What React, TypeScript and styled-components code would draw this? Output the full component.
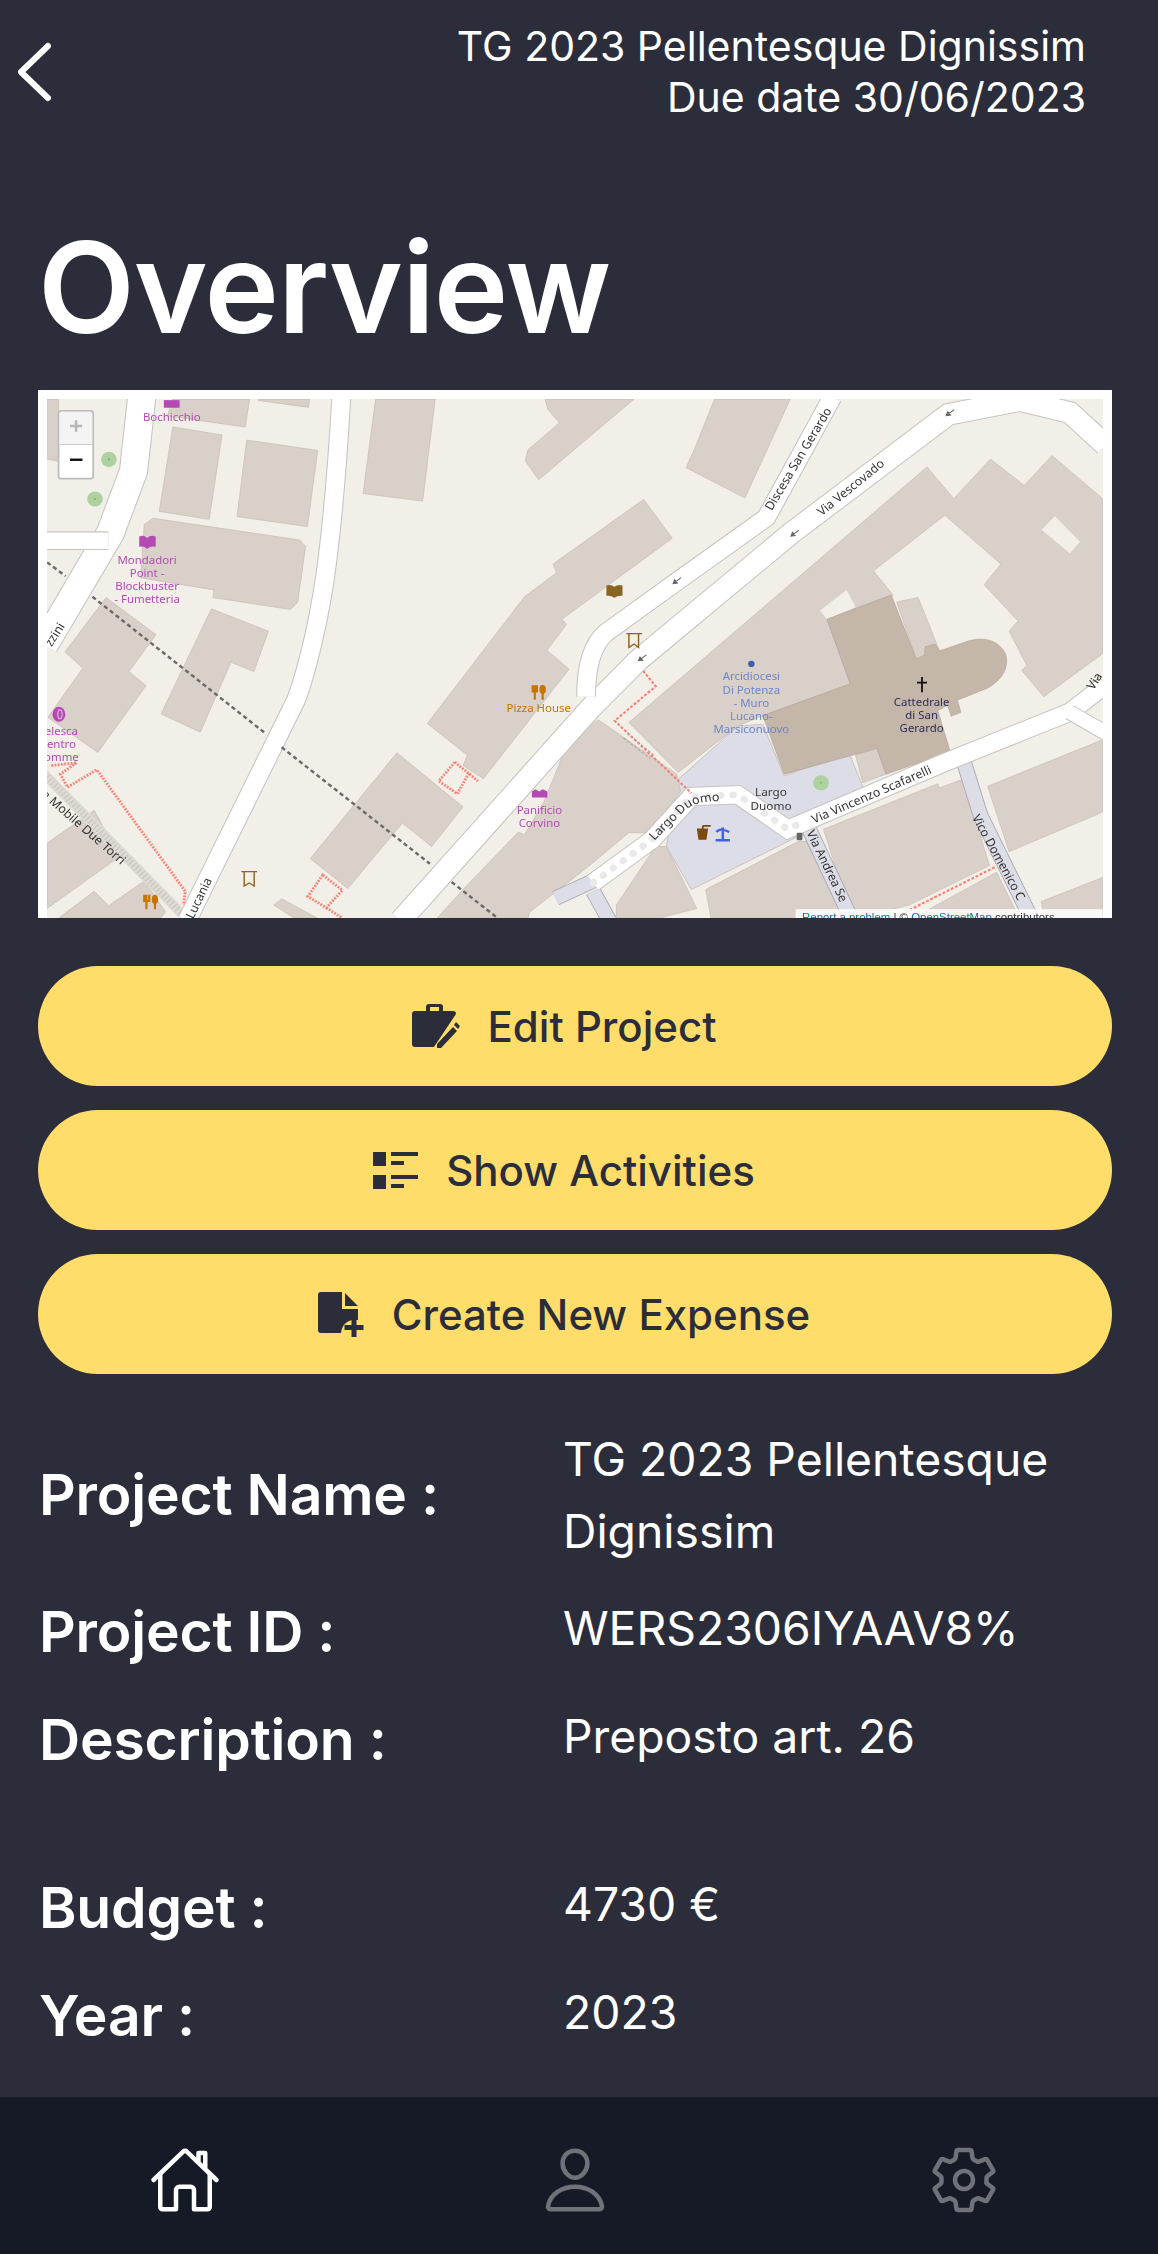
import { ReactNode } from "react";
import styled, { createGlobalStyle } from "styled-components";
import { IoHomeOutline, IoPersonOutline, IoSettingsOutline } from "react-icons/io5";

const GlobalStyle = createGlobalStyle`
  html, body {
    margin: 0;
    padding: 0;
    background: #2b2d3a;
  }
`;

const Page = styled.div`
  width: 1158px;
  height: 2254px;
  display: flex;
  flex-direction: column;
  overflow: hidden;

  color: #fff;
  font-family: Inter, "Noto Sans", sans-serif;
  background: #2b2d3a;
`;

const Header = styled.header`
  display: flex;
  justify-content: space-between;
  height: 184px;
  padding: 21px 72px 0 16px;
  flex-shrink: 0;
`;

const BackIcon = styled.svg`
  width: 38px;
  height: 60px;
  margin-top: 21px;
`;

const HeaderInfo = styled.div`
  font-size: 41px;
  line-height: 51px;
  text-align: right;
`;

const Title = styled.h1`
  margin: 0 0 0 38px;
  height: 185px;

  font-size: 126px;
  font-weight: 600;
  line-height: 164px;
  letter-spacing: -1px;
`;

const MapFrame = styled.div`
  width: 1056px;
  height: 519px;
  margin-left: 38px;
  padding: 9px 9px 0;
  background: #fff;
  flex-shrink: 0;
`;

const MapSvg = styled.svg`
  display: block;
  width: 1056px;
  height: 519px;
  filter: blur(0.55px);
`;

const MapLabel = styled.text<{ $color: string; $size?: number }>`
  font-family: "Noto Sans", sans-serif;
  font-size: ${({ $size }) => $size ?? 32}px;
  fill: ${({ $color }) => $color};
  text-anchor: middle;
`;

const StreetLabel = styled.text<{ $start?: boolean }>`
  font-family: "Noto Sans", sans-serif;
  font-size: 35px;
  fill: #333;
  text-anchor: ${({ $start }) => ($start ? "start" : "middle")};
`;

const Attribution = styled.text`
  font-family: "Liberation Sans", sans-serif;
  font-size: 32px;
  fill: #333;
`;

const AttributionLink = styled.tspan`
  fill: #0078a8;
`;

const Buttons = styled.div`
  display: flex;
  flex-direction: column;
  gap: 24px;
  margin: 48px 46px 0 38px;
`;

const ActionButton = styled.button`
  display: flex;
  align-items: center;
  justify-content: center;
  gap: 28px;
  height: 120px;
  padding: 0 22px 0 0;

  color: #2b2d3a;
  font-family: inherit;
  font-size: 42px;
  font-weight: 500;

  background: #ffdd6b;
  border: none;
  border-radius: 60px;
`;

const Details = styled.div`
  display: flex;
  flex-direction: column;
  margin: 49px 0 0 39px;
`;

const Row = styled.div<{ $gap: number }>`
  display: grid;
  grid-template-columns: 525px 1fr;
  align-items: start;
  margin-bottom: ${({ $gap }) => $gap}px;
`;

const Label = styled.div<{ $top: number }>`
  padding-top: ${({ $top }) => $top}px;
  font-size: 57px;
  font-weight: 600;
  line-height: 72px;
  letter-spacing: -0.2px;
`;

const Value = styled.div`
  width: 520px;
  margin-left: -1px;
  font-size: 46.3px;
  line-height: 72px;
`;

const TabBar = styled.nav`
  display: grid;
  grid-template-columns: 185px 390px 389px;
  height: 157px;
  margin-top: auto;
  background: #161a26;
  flex-shrink: 0;
`;

const Tab = styled.div<{ $active?: boolean }>`
  display: flex;
  justify-content: flex-end;
  align-items: center;
  padding-top: 8px;
  color: ${({ $active }) => ($active ? "#fff" : "#6f7278")};

  svg {
    width: 72px;
    height: 72px;
    margin-right: -36px;
  }
`;

const colors = {
  bg: "#f2efe9",
  building: "#d9d0c9",
  buildingEdge: "#c6bbb1",
  church: "#c4b6a9",
  plaza: "#dddde8",
  poi: "#b449b4",
  food: "#c77400",
  brown: "#8a6420",
  blue: "#6f86c8",
  pink: "#fa8072",
};

// traced from the 3x crops, the first list sits on the left half of the map
const leftBuildings = [
  "48,41 80,41 80,222 48,215",
  "400,41 615,41 603,122 385,90",
  "640,41 783,41 780,65 640,45",
  "400,122 538,145 502,390 362,367",
  "607,160 806,190 777,411 580,382",
  "345,387 755,450 772,468 750,630 730,652 512,617 515,595 310,560 320,405",
  "508,650 668,715 627,832 563,805 477,1008 367,955",
  "213,617 353,725 277,832 325,873 190,1067 50,965 148,822 98,775",
  "968,41 1135,41 1100,337 933,315",
  "1443,41 1692,41 1425,275 1387,220 1395,188 1483,110 1450,70",
  "1719,332 1465,520 1475,545 1385,615 1113,983 1225,1075 1213,1105 1270,1143 1510,825 1448,770 1503,695 1490,680 1799,445",
  "1028,1068 1213,1225 1125,1340 1043,1272 890,1462 785,1375",
  "48,1330 180,1235 250,1370 48,1520",
  "80,1548 180,1470 220,1512 320,1440 380,1530 365,1548",
  "683,1510 705,1492 805,1548 740,1548",
  "1140,1548 1222,1455 1368,1298 1385,1306 1440,1210 1510,1030 1592,972 1812,1130 1822,1180 1732,1300 1677,1300 1562,1400 1400,1530 1395,1548",
];

const rightBuildings = [
  "405,41 617,41 490,328 325,240 345,195",
  "165,980 1000,238 1075,330 1178,215 1272,292 1350,205 1492,330 1492,780 1327,905 1265,828 1280,815 1230,715 1255,685 1160,580 1207,520 1050,378 850,540 905,610 720,680 785,868 540,960 470,990 303,1125",
  "915,630 975,617 1035,772 970,795",
  "800,1075 860,1055 885,1130 820,1155",
  "710,1290 1030,1158 1035,1170 1100,1145 1175,1395 950,1510 800,1548 790,1548",
  "1170,1165 1492,1030 1492,1240 1230,1355",
  "1320,1500 1492,1430 1492,1548 1330,1548",
  "380,1465 640,1325 660,1325 780,1548 395,1548",
  "960,1548 1195,1415 1255,1540 1260,1548",
  "130,1510 240,1340 270,1340 355,1520 250,1548 130,1548",
];

const leftRoads = [
  { d: "M313,35 L290,250 L225,430 L40,755", w: 76 },
  { d: "M40,452 L220,452", w: 48 },
  { d: "M872,35 C855,350 830,550 815,630 C800,720 770,850 745,915 L440,1555", w: 50 },
];

const rightRoads = [
  { d: "M-474,1555 L56,940 L190,800 L620,430 L1060,85 L1260,45 L1400,80 L1500,175", w: 60 },
  { d: "M735,35 L550,385 L300,570 L100,720 Q45,770 45,905", w: 50 },
  { d: "M65,1445 L230,1320 L340,1195 L470,1190 L610,1290 L700,1250 L1040,1100 L1400,950 L1500,870", w: 50 },
  { d: "M1400,950 L1500,1010", w: 40 },
];

const serviceRoads = [
  "M670,1290 L790,1555",
  "M1105,1100 L1150,1250 L1295,1555",
  "M65,1470 L110,1555",
  "M-40,1490 L65,1440",
];

const arrows = [
  [300, 568],
  [630, 430],
  [203, 792],
  [1065, 80],
];

type RoadProps = { d: string; w: number };

function Road({ d, w }: RoadProps) {
  return (
    <>
      <path d={d} fill="none" stroke="#c8c4be" strokeWidth={w + 6} />
      <path d={d} fill="none" stroke="#fff" strokeWidth={w} />
    </>
  );
}

function Arrow({ x, y }: { x: number; y: number }) {
  return (
    <g transform={`translate(${x} ${y}) rotate(-38)`}>
      <path d="M-14,0 H14 M-14,0 L-4,-6 V6 Z" stroke="#666" strokeWidth="3" fill="#666" />
    </g>
  );
}

function Trees({ list }: { list: number[][] }) {
  return (
    <>
      {list.map(([x, y]) => (
        <g key={`${x}-${y}`}>
          <circle cx={x} cy={y} r="22" fill="#aed1a0" />
          <circle cx={x} cy={y} r="3" fill="#82ad78" />
        </g>
      ))}
    </>
  );
}

const LEFT_TF = "translate(-17 -14) scale(0.357 0.3444)";
const RIGHT_TF = "translate(523 -14) scale(0.357 0.3444)";

function OsmMap() {
  return (
    <MapSvg viewBox="0 0 1056 519">
      <defs>
        <path id="largo-duomo" d="M225,1335 L325,1232 Q360,1205 435,1208" />
      </defs>
      <rect width="1056" height="519" fill={colors.bg} />

      <g transform={RIGHT_TF}>
        <polygon
          points="303,1145 470,990 540,985 600,1135 780,1065 820,1165 660,1300 340,1465 270,1340"
          fill={colors.plaza}
          stroke="#b9b5ae"
          strokeWidth="2"
        />
      </g>

      <g transform={LEFT_TF}>
        {leftBuildings.map((p) => (
          <polygon key={p} points={p} fill={colors.building} stroke={colors.buildingEdge} strokeWidth="2" />
        ))}
        {/* tram strip */}
        <path d="M40,1130 L425,1535" stroke="#dedbd5" strokeWidth="28" fill="none" />
        <path d="M40,1130 L425,1535" stroke="#c4c2be" strokeWidth="20" strokeDasharray="3 8" fill="none" />
      </g>

      <g transform={RIGHT_TF}>
        {rightBuildings.map((p) => (
          <polygon key={p} points={p} fill={colors.building} stroke={colors.buildingEdge} strokeWidth="2" />
        ))}
        <polygon points="700,655 775,595 800,645 720,680" fill={colors.bg} />
        <polygon points="1320,420 1358,380 1430,455 1400,490" fill={colors.bg} stroke={colors.buildingEdge} />
        <path
          d="M720,680 L900,610 L970,795 L993,785 L995,760 L1022,752 L1035,772 L1120,742 Q1190,725 1220,780 Q1235,840 1170,880 L1085,915 L1095,950 L1068,962 L1058,930 L1030,945 L1065,1065 L885,1130 L860,1055 L600,1130 L540,960 L785,868 Z"
          fill={colors.church}
          stroke="#b3a597"
          strokeWidth="2"
        />
        {serviceRoads.map((d) => (
          <g key={d}>
            <path d={d} fill="none" stroke="#a9a8ad" strokeWidth="44" />
            <path d={d} fill="none" stroke={colors.plaza} strokeWidth="39" />
          </g>
        ))}
      </g>

      <g transform={LEFT_TF}>
        {leftRoads.map((r) => (
          <Road key={r.d} {...r} />
        ))}
        <path d="M48,515 L100,555 M175,615 L660,1012 M705,1052 L1120,1390 M1165,1430 L1310,1548" stroke="#6b6b6b" strokeWidth="7" strokeDasharray="12 9" fill="none" />
        <path d="M60,1105 L130,1097 M130,1097 L85,1130 L105,1168 L187,1117 L435,1470 L430,1510" stroke={colors.pink} strokeWidth="8" strokeDasharray="5 4" fill="none" />
        <path d="M1190,1095 L1145,1150 L1197,1187 L1230,1125 M1190,1095 L1255,1150" stroke={colors.pink} strokeWidth="8" strokeDasharray="5 4" fill="none" />
        <path d="M820,1423 L875,1467 L830,1518 L778,1485 Z M830,1518 L875,1548" stroke={colors.pink} strokeWidth="8" strokeDasharray="5 4" fill="none" />
        <Trees
          list={[
            [221, 216],
            [182, 331],
          ]}
        />
        <Arrow x={1378} y={1125} />
      </g>

      <g transform={RIGHT_TF}>
        {rightRoads.map((r) => (
          <Road key={r.d} {...r} />
        ))}
        <path d="M65,1445 L230,1320 L340,1195 L470,1190 L610,1290 L660,1265" fill="none" stroke="#e9e9ea" strokeWidth="20" strokeLinecap="round" strokeDasharray="1 34" />
        <path d="M205,830 L240,875 L125,975 L340,1185" stroke={colors.pink} strokeWidth="6" strokeDasharray="8 5" fill="none" />
        <path d="M160,1010 L235,1075 M150,1025 L225,1085" stroke="#a8a6a2" strokeWidth="3" strokeDasharray="8 5" fill="none" />
        <path d="M940,1530 L1190,1400" stroke={colors.pink} strokeWidth="6" strokeDasharray="8 5" fill="none" />
        <Trees list={[[703, 1155]]} />
        {arrows.map(([x, y]) => (
          <Arrow key={x} x={x} y={y} />
        ))}

        <StreetLabel transform="translate(640 215) rotate(-60)" dy="11">Discesa San Gerardo</StreetLabel>
        <StreetLabel transform="translate(787 298) rotate(-40)" dy="11">Via Vescovado</StreetLabel>
        <StreetLabel transform="translate(845 1190) rotate(-24)" dy="11">Via Vincenzo Scafarelli</StreetLabel>
        <StreetLabel $start transform="translate(672 1295) rotate(65)" dy="11">Via Andrea Se</StreetLabel>
        <StreetLabel $start transform="translate(1135 1250) rotate(62)" dy="11">Vico Domenico C</StreetLabel>
        <StreetLabel transform="translate(1470 860) rotate(-58)" dy="11">Via</StreetLabel>
        <StreetLabel>
          <textPath href="#largo-duomo" startOffset="50%">Largo Duomo</textPath>
        </StreetLabel>
        <MapLabel $color="#3a3a3a" $size={33} x="563" y="1192">Largo</MapLabel>
        <MapLabel $color="#3a3a3a" $size={33} x="563" y="1234">Duomo</MapLabel>

        <circle cx="508" cy="810" r="9" fill="#3e5fad" />
        {["Arcidiocesi", "Di Potenza", "- Muro", "Lucano-", "Marsiconuovo"].map((t, i) => (
          <MapLabel key={t} $color={colors.blue} x="508" y={858 + i * 38}>{t}</MapLabel>
        ))}
        <path d="M986,848 V892 M972,864 H1000" stroke="#111" strokeWidth="5" fill="none" />
        {["Cattedrale", "di San", "Gerardo"].map((t, i) => (
          <MapLabel key={t} $color="#2d2d5c" x="985" y={933 + i * 38}>{t}</MapLabel>
        ))}

        {/* pois */}
        <path d="M102,582 Q115,578 124,586 Q135,578 147,582 V612 Q135,610 124,618 Q115,610 102,612 Z" fill={colors.brown} />
        <path d="M158,722 H202 M165,724 V762 L180,752 L192,762 V724" stroke={colors.brown} strokeWidth="4" fill="none" />
        <path d="M358,1290 H384 L380,1318 H362 Z M372,1280 H394 M372,1280 V1290" stroke="#7a4a10" strokeWidth="5" fill="#7a4a10" />
        <path d="M428,1285 V1318 M410,1298 Q420,1284 446,1298 M408,1322 H448" stroke="#3f63e0" strokeWidth="7" fill="none" />
        <rect x="635" y="1300" width="16" height="22" rx="3" fill="#666" />

        <rect x="632" y="1522" width="860" height="30" fill="#fff" fillOpacity="0.85" />
        <Attribution x="650" y="1556">
          <AttributionLink>Report a problem</AttributionLink> | © <AttributionLink>OpenStreetMap</AttributionLink> contributors
        </Attribution>
      </g>

      <g transform={LEFT_TF}>
        <MapLabel $color={colors.poi} x="397" y="104">Bochicchio</MapLabel>
        <rect x="375" y="44" width="44" height="22" fill={colors.poi} />
        <path d="M306,440 Q318,434 328,444 Q338,434 352,440 V470 Q338,466 328,476 Q318,466 306,470 Z" fill={colors.poi} />
        {["Mondadori", "Point -", "Blockbuster", "- Fumetteria"].map((t, i) => (
          <MapLabel key={t} $color={colors.poi} x="328" y={520 + i * 38}>{t}</MapLabel>
        ))}
        <ellipse cx="81" cy="956" rx="18" ry="22" fill={colors.poi} />
        <ellipse cx="84" cy="956" rx="6" ry="13" fill="none" stroke="#e4c5e4" strokeWidth="3" />
        {["elesca", "entro", "omme"].map((t, i) => (
          <MapLabel key={t} $color={colors.poi} x="88" y={1016 + i * 38}>{t}</MapLabel>
        ))}
        <path d="M1414,872 V914 M1408,872 V890 H1420 V872 M1436,872 V914" stroke={colors.food} strokeWidth="6" fill="none" />
        <ellipse cx="1436" cy="884" rx="9" ry="13" fill={colors.food} />
        <MapLabel $color={colors.food} x="1425" y="950">Pizza House</MapLabel>
        <path d="M1406,1180 L1416,1174 L1426,1180 L1436,1174 L1449,1180 V1198 H1406 Z" fill={colors.poi} />
        <MapLabel $color={colors.poi} x="1427" y="1245">Panificio</MapLabel>
        <MapLabel $color={colors.poi} x="1427" y="1283">Corvino</MapLabel>
        <path d="M592,1413 H636 M600,1415 V1455 L614,1446 L628,1455 V1415" stroke={colors.brown} strokeWidth="4" fill="none" />
        <path d="M326,1480 V1522 M320,1480 V1498 H334 V1480 M350,1480 V1522" stroke={colors.food} strokeWidth="6" fill="none" />
        <ellipse cx="350" cy="1494" rx="9" ry="13" fill={colors.food} />
        <StreetLabel transform="translate(70 725) rotate(-58)" dy="11">zzini</StreetLabel>
        <StreetLabel transform="translate(150 1285) rotate(42)" dy="11">a Mobile Due Torri</StreetLabel>
        <StreetLabel transform="translate(474 1490) rotate(-65)" dy="11">Lucania</StreetLabel>

        {/* zoom control */}
        <rect x="80" y="75" width="97" height="197" rx="7" fill="#fff" stroke="#bdbdbd" strokeWidth="5" />
        <path d="M83,173 V85 Q83,78 90,78 H167 Q174,78 174,85 V173 Z" fill="#f4f4f4" />
        <path d="M83,173 H174" stroke="#c9c9c9" strokeWidth="3" />
        <path d="M129,102 V136 M112,119 H146" stroke="#b5b5b5" strokeWidth="7" />
        <path d="M112,217 H147" stroke="#111" strokeWidth="7" />
      </g>
    </MapSvg>
  );
}

function EditProjectIcon() {
  return (
    <svg width="48" height="46" viewBox="0 0 48 46" fill="#2b2d3a">
      <path
        fillRule="evenodd"
        d="M3,8 H14 V4 a3,3 0 0 1 3,-3 h11 a3,3 0 0 1 3,3 V8 h10 a3,3 0 0 1 3,3 L22,44 H3 a3,3 0 0 1 -3,-3 V11 a3,3 0 0 1 3,-3 Z M18,4 h9 v4 h-9 Z"
      />
      <path d="M25,41 L41,24 L45,28 L29,45 L25,45 Z M42,22 L44,19 L48,23 L46,26 Z" />
    </svg>
  );
}

function ActivitiesIcon() {
  return (
    <svg width="45" height="37" viewBox="0 0 45 37" fill="#2b2d3a">
      <path d="M0,0 H13 V14 H0 Z M0,23 H13 V37 H0 Z M18,0 H45 V4 H18 Z M18,9 H31 V13 H18 Z M18,23 H45 V27 H18 Z M18,32 H31 V36 H18 Z" />
    </svg>
  );
}

function NewExpenseIcon() {
  return (
    <svg width="46" height="45" viewBox="0 0 46 45" fill="#2b2d3a">
      <path d="M3,0 H24 V17 H40 V28 A14,14 0 0 0 23,41 H3 a3,3 0 0 1 -3,-3 V3 a3,3 0 0 1 3,-3 Z" />
      <path d="M27,1 L40,14 H27 Z M33.5,26 h5 v7 h7 v5 h-7 v7 h-5 v-7 h-7 v-5 h7 Z" />
    </svg>
  );
}

type DetailRowProps = {
  label: string;
  top?: number;
  gap: number;
  children: ReactNode;
};

function DetailRow({ label, top = 4, gap, children }: DetailRowProps) {
  return (
    <Row $gap={gap}>
      <Label $top={top}>{label}</Label>
      <Value>{children}</Value>
    </Row>
  );
}

export default function App() {
  return (
    <>
      <GlobalStyle />
      <Page>
        <Header>
          <BackIcon viewBox="0 0 38 60" fill="none" stroke="#fff" strokeWidth="6" strokeLinecap="round" strokeLinejoin="round">
            <path d="M32,4 L5,30 L32,56" />
          </BackIcon>
          <HeaderInfo>
            TG 2023 Pellentesque Dignissim
            <br />
            Due date 30/06/2023
          </HeaderInfo>
        </Header>

        <Title>Overview</Title>

        <MapFrame>
          <OsmMap />
        </MapFrame>

        <Buttons>
          <ActionButton>
            <EditProjectIcon />
            Edit Project
          </ActionButton>
          <ActionButton>
            <ActivitiesIcon />
            Show Activities
          </ActionButton>
          <ActionButton>
            <NewExpenseIcon />
            Create New Expense
          </ActionButton>
        </Buttons>

        <Details>
          <DetailRow label="Project Name :" top={36} gap={25}>
            TG 2023 Pellentesque Dignissim
          </DetailRow>
          <DetailRow label="Project ID :" gap={32}>
            WERS2306IYAAV8%
          </DetailRow>
          <DetailRow label="Description :" gap={92}>
            Preposto art. 26
          </DetailRow>
          <DetailRow label="Budget :" gap={32}>
            4730 €
          </DetailRow>
          <DetailRow label="Year :" gap={0}>
            2023
          </DetailRow>
        </Details>

        <TabBar>
          <Tab $active>
            <IoHomeOutline />
          </Tab>
          <Tab>
            <IoPersonOutline />
          </Tab>
          <Tab>
            <IoSettingsOutline />
          </Tab>
        </TabBar>
      </Page>
    </>
  );
}
